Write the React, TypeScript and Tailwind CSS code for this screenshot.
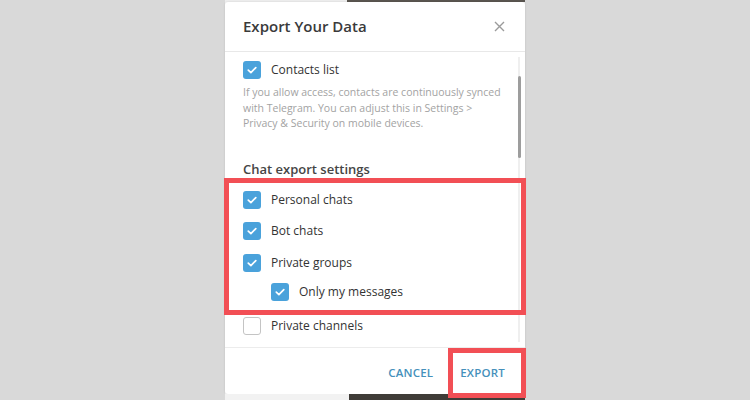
import React from "react";

const Check = ({ on }: { on: boolean }) =>
  on ? (
    <span className="flex h-[18px] w-[18px] shrink-0 items-center justify-center rounded-[3px] bg-[#4aa2db]">
      <svg width="12" height="12" viewBox="0 0 12 12" fill="none">
        <path d="M2.3 6.2 4.9 8.7 9.8 3.6" stroke="#fff" strokeWidth="1.7" strokeLinecap="round" strokeLinejoin="round" />
      </svg>
    </span>
  ) : (
    <span className="h-[18px] w-[18px] shrink-0 rounded-[3px] border-[1.5px] border-[#c4c4c4] bg-white" />
  );

const Row = ({ label, on, className = "" }: { label: string; on: boolean; className?: string }) => (
  <div className={`flex h-[18px] items-center gap-[10px] ${className}`}>
    <Check on={on} />
    <span className="text-[12px] leading-[18px] text-[#333]">{label}</span>
  </div>
);

export default function App() {
  return (
    <div
      className="relative flex h-[400px] w-[750px] justify-center overflow-hidden bg-[#d9d9d9]"
      style={{ fontFamily: '"Open Sans", "Noto Sans", sans-serif' }}
    >
      {/* app window behind the dialog */}
      <div className="flex w-[300px] flex-col bg-[#f4f4f4]">
        <div className="flex h-[2px]">
          <div className="w-[122px] bg-[#eeeeee]" />
          <div className="flex-1 bg-[#5a5650]" />
        </div>

        {/* dialog */}
        <div className="flex h-[392px] flex-col rounded-[3px] bg-white shadow-[0_0_2px_rgba(0,0,0,0.15)]">
          <div className="flex h-[50px] shrink-0 items-center justify-between border-b border-[#e8e8e8] pl-[18px] pr-[20px]">
            <span className="text-[15px] font-semibold text-[#3a3a3a]">Export Your Data</span>
            <svg width="11" height="11" viewBox="0 0 11 11">
              <path d="M1 1 10 10M10 1 1 10" stroke="#9b9b9b" strokeWidth="1.4" />
            </svg>
          </div>

          <div className="flex h-[295px] shrink-0 overflow-hidden">
            <div className="flex flex-1 flex-col pl-[18px] pt-[9px]">
              <Row label="Contacts list" on />
              <p className="mt-[6px] pr-[12px] text-[10.5px] leading-[15.5px] text-[#a3a3a3]">
                If you allow access, contacts are continuously synced with Telegram. You can adjust this in Settings &gt; Privacy &amp; Security on mobile devices.
              </p>
              <div className="mt-[28px] text-[13px] font-semibold leading-[18px] text-[#454545]">Chat export settings</div>
              <Row label="Personal chats" on className="mt-[13px]" />
              <Row label="Bot chats" on className="mt-[13px]" />
              <Row label="Private groups" on className="mt-[14px]" />
              <Row label="Only my messages" on className="ml-[28px] mt-[11px]" />
              <Row label="Private channels" on={false} className="mt-[16px]" />
            </div>
            <div className="mr-[4px] mt-[5px] flex h-[285px] w-[4px] flex-col items-center">
              <div className="flex h-full w-[2px] flex-col bg-[#efefef]">
                <div className="mt-[19px] h-[82px] w-[3px] rounded-full bg-[#9d9d9d]" />
              </div>
            </div>
          </div>

          <div className="flex flex-1 items-center justify-end gap-[27px] border-t border-[#ececec] pt-[3px] pr-[20px]">
            <span className="text-[11.5px] font-semibold tracking-[0.2px] text-[#4590bb]">CANCEL</span>
            <span className="text-[11.5px] font-semibold tracking-[0.2px] text-[#4590bb]">EXPORT</span>
          </div>
        </div>

        <div className="flex flex-1">
          <div className="w-[124px] bg-[#f2f2f2]" />
          <div className="flex-1 bg-[#3f3c38]" />
        </div>
      </div>

      {/* annotation highlights */}
      <div className="pointer-events-none absolute left-[224px] top-[178px] h-[137px] w-[302px] border-[5px] border-[#f24f55]" />
      <div className="pointer-events-none absolute left-[448px] top-[348px] h-[50px] w-[78px] border-[5px] border-[#f24f55]" />
    </div>
  );
}
